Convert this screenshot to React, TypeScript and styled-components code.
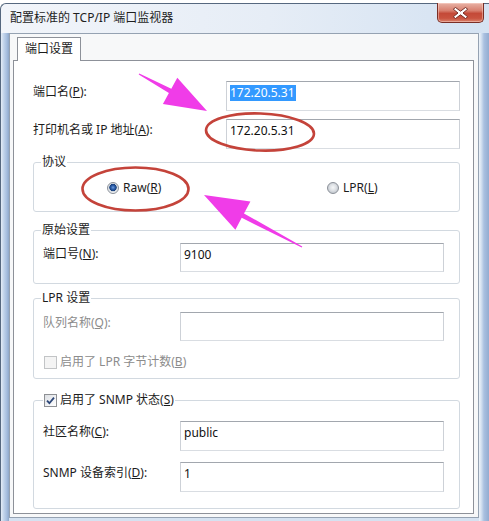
import React from "react";
import styled, { createGlobalStyle } from "styled-components";

const GlobalStyle = createGlobalStyle`
  html, body { margin: 0; padding: 0; background: #ffffff; }
  body {
    font-family: "Noto Sans", "Noto Sans CJK SC", sans-serif;
    font-size: 12px;
    color: #1c1c1c;
  }
  * { box-sizing: border-box; }
  u { text-underline-offset: 1px; }
`;

const Stage = styled.div`
  position: relative;
  width: 489px;
  height: 521px;
  padding-top: 3px;
  overflow: hidden;
  background: #ffffff;
`;

const Window = styled.div`
  height: 518px;
  display: flex;
  flex-direction: column;
  border-top: 1px solid #56687f;
  border-left: 1px solid #56687f;
  border-top-left-radius: 6px;
  background: linear-gradient(to right, #f2f5fa 0%, #e6edf6 55%, #d4e2f2 100%);
`;

const TitleBar = styled.div`
  height: 29px;
  display: flex;
  align-items: flex-start;
  justify-content: space-between;
  padding-left: 9px;
`;

const TitleText = styled.div`
  margin-top: 6px;
  line-height: 16px;
  color: #1e1e1e;
  white-space: nowrap;
`;

const CloseButton = styled.div`
  width: 47px;
  height: 20px;
  margin-top: -1px;
  margin-right: 5px;
  display: flex;
  align-items: center;
  justify-content: center;
  border: 1px solid #7a2e25;
  border-top: none;
  border-radius: 0 0 5px 5px;
  background: linear-gradient(to bottom, #e8b2a6 0%, #d8806f 40%, #c44a38 55%, #c9533f 80%, #d9826c 100%);
  box-shadow: inset 0 0 0 1px rgba(255, 220, 210, 0.45);
`;

const Body = styled.div`
  flex: 1;
  display: flex;
  padding: 0 10px 3px 8px;
  background:
    linear-gradient(to right, #e4ecf6 0px, #bfd2ea 3px, #a4bcdd 6px, #8ea7c9 8px, transparent 8px),
    linear-gradient(to left, #93acd0 0px, #a9c0e0 5px, #d8e4f2 8px, #eef3f9 10px, transparent 10px),
    #d5e2f1;
`;

const Client = styled.div`
  flex: 1;
  display: flex;
  flex-direction: column;
  background: #f7f8f9;
  border: 1px solid #95a2b2;
  padding: 3px 4px 3px 3px;
`;

const TabStrip = styled.div`
  display: flex;
  padding-left: 4px;
`;

const Tab = styled.div`
  position: relative;
  z-index: 1;
  height: 24px;
  margin-bottom: -1px;
  padding: 0 7px;
  line-height: 22px;
  background: #ffffff;
  border: 1px solid #8d9199;
  border-bottom: none;
  color: #1c1c1c;
`;

const TabPage = styled.div`
  flex: 1;
  display: flex;
  flex-direction: column;
  background: #ffffff;
  border: 1px solid #8d9199;
  padding: 20px 13px 4px 19px;
`;

const FieldRow = styled.div<{ $label: number; $input: number; $mt?: number }>`
  display: grid;
  grid-template-columns: ${(p) => p.$label}px ${(p) => p.$input}px;
  align-items: start;
  margin-top: ${(p) => p.$mt ?? 0}px;
`;

const Label = styled.div<{ $disabled?: boolean }>`
  padding-top: 3px;
  line-height: 16px;
  white-space: nowrap;
  color: ${(p) => (p.$disabled ? "#8c8c8c" : "#1c1c1c")};
`;

const TextBox = styled.div<{ $h?: number }>`
  height: ${(p) => p.$h ?? 29}px;
  padding: 2px 3px;
  line-height: 17px;
  background: #ffffff;
  border: 1px solid;
  border-color: #a2a7ae #cdd1d7 #d9dde2 #cdd1d7;
  color: #111111;
  white-space: nowrap;
`;

const Selected = styled.span`
  display: inline-block;
  line-height: 16px;
  padding: 0 1px 0 0;
  background: #3399ff;
  color: #ffffff;
`;

const Group = styled.fieldset<{ $mt: number; $pb: number }>`
  margin: ${(p) => p.$mt}px 0 0 0;
  min-width: 0;
  padding: 0 9px ${(p) => p.$pb}px 9px;
  border: 1px solid #d2d9e0;
  border-radius: 3px;
`;

const Legend = styled.legend<{ $ml?: number }>`
  margin-left: ${(p) => p.$ml ?? -2}px;
  padding: 0 1px;
  line-height: 14px;
  height: 14px;
  display: flex;
  align-items: center;
  gap: 3px;
  white-space: nowrap;
  color: #1c1c1c;
`;

const RadioRow = styled.div`
  display: grid;
  grid-template-columns: 220px auto;
  align-items: center;
  height: 20px;
  margin: 9px 0 13px 0;
  padding-left: 64px;
`;

const RadioItem = styled.div`
  display: flex;
  align-items: center;
  gap: 4px;
  line-height: 16px;
  white-space: nowrap;
`;

const RadioCircle = styled.span<{ $checked?: boolean }>`
  width: 12px;
  height: 12px;
  border-radius: 50%;
  border: 1px solid #8b9098;
  background: ${(p) =>
    p.$checked
      ? "radial-gradient(circle at 50% 45%, #6d9ee0 0px, #2a5aa6 2px, #173f7c 3.4px, #c9d0d8 3.9px, #eef1f4 5px)"
      : "radial-gradient(circle at 50% 45%, #f6f7f8 0px, #dfe2e6 3px, #c9ced4 5px)"};
`;

const CheckRow = styled.div<{ $disabled?: boolean }>`
  display: flex;
  align-items: center;
  gap: 3px;
  height: 16px;
  margin: 13px 0 0 1px;
  line-height: 16px;
  white-space: nowrap;
  color: ${(p) => (p.$disabled ? "#8c8c8c" : "#1c1c1c")};
`;

const CheckBox = styled.span<{ $disabled?: boolean }>`
  width: 13px;
  height: 13px;
  flex: none;
  display: flex;
  align-items: center;
  justify-content: center;
  border: 1px solid ${(p) => (p.$disabled ? "#c2c4c6" : "#8e9094")};
  background: ${(p) =>
    p.$disabled ? "#f4f4f4" : "linear-gradient(135deg, #dcdfe3 0%, #f2f3f5 60%, #ffffff 100%)"};
`;

const Overlay = styled.svg`
  position: absolute;
  left: 0;
  top: 0;
  width: 489px;
  height: 521px;
  pointer-events: none;
`;

const CloseGlyph = () => (
  <svg width="17" height="14" viewBox="0 0 17 14">
    <path
      d="M3.5 1.5 L8.5 5.2 L13.5 1.5 L15.7 3.2 L11 7 L15.7 10.8 L13.5 12.5 L8.5 8.8 L3.5 12.5 L1.3 10.8 L6 7 L1.3 3.2 Z"
      fill="#ffffff"
      stroke="#6b231b"
      strokeWidth="0.9"
      strokeLinejoin="round"
    />
  </svg>
);

const CheckMark = () => (
  <svg width="11" height="11" viewBox="0 0 11 11">
    <path d="M2 5.6 L4.4 8.2 L9 2.6" fill="none" stroke="#2d4778" strokeWidth="1.8" />
  </svg>
);

type Pt = [number, number];

// Tapered arrow: thin tail, widening shaft, triangular head at the tip.
function arrowPoints(tail: Pt, tip: Pt, headLen: number, headHalf: number, shaftHalf: number): string {
  const dx = tip[0] - tail[0];
  const dy = tip[1] - tail[1];
  const len = Math.hypot(dx, dy);
  const ux = dx / len;
  const uy = dy / len;
  const nx = -uy;
  const ny = ux;
  const bx = tip[0] - ux * headLen;
  const by = tip[1] - uy * headLen;
  const pts: Pt[] = [
    [tail[0] + nx * 0.6, tail[1] + ny * 0.6],
    [bx + nx * shaftHalf, by + ny * shaftHalf],
    [bx + nx * headHalf, by + ny * headHalf],
    tip,
    [bx - nx * headHalf, by - ny * headHalf],
    [bx - nx * shaftHalf, by - ny * shaftHalf],
    [tail[0] - nx * 0.6, tail[1] - ny * 0.6],
  ];
  return pts.map((p) => `${p[0].toFixed(1)},${p[1].toFixed(1)}`).join(" ");
}

export default function App() {
  return (
    <>
      <GlobalStyle />
      <Stage>
        <Window>
          <TitleBar>
            <TitleText>配置标准的 TCP/IP 端口监视器</TitleText>
            <CloseButton>
              <CloseGlyph />
            </CloseButton>
          </TitleBar>
          <Body>
            <Client>
              <TabStrip>
                <Tab>端口设置</Tab>
              </TabStrip>
              <TabPage>
                <FieldRow $label={193} $input={234}>
                  <Label>
                    端口名(<u>P</u>):
                  </Label>
                  <TextBox $h={30}>
                    <Selected>172.20.5.31</Selected>
                  </TextBox>
                </FieldRow>
                <FieldRow $label={193} $input={234} $mt={8}>
                  <Label>
                    打印机名或 IP 地址(<u>A</u>):
                  </Label>
                  <TextBox $h={30}>172.20.5.31</TextBox>
                </FieldRow>

                <Group $mt={6} $pb={0}>
                  <Legend>协议</Legend>
                  <RadioRow>
                    <RadioItem>
                      <RadioCircle $checked />
                      <span>
                        Raw(<u>R</u>)
                      </span>
                    </RadioItem>
                    <RadioItem>
                      <RadioCircle />
                      <span>
                        LPR(<u>L</u>)
                      </span>
                    </RadioItem>
                  </RadioRow>
                </Group>

                <Group $mt={11} $pb={11}>
                  <Legend>原始设置</Legend>
                  <FieldRow $label={137} $input={264} $mt={6}>
                    <Label>
                      端口号(<u>N</u>):
                    </Label>
                    <TextBox>9100</TextBox>
                  </FieldRow>
                </Group>

                <Group $mt={7} $pb={8}>
                  <Legend>LPR 设置</Legend>
                  <FieldRow $label={137} $input={264} $mt={7}>
                    <Label $disabled>
                      队列名称(<u>Q</u>):
                    </Label>
                    <TextBox />
                  </FieldRow>
                  <CheckRow $disabled>
                    <CheckBox $disabled />
                    <span>
                      启用了 LPR 字节计数(<u>B</u>)
                    </span>
                  </CheckRow>
                </Group>

                <Group $mt={14} $pb={16}>
                  <Legend $ml={0}>
                    <CheckBox>
                      <CheckMark />
                    </CheckBox>
                    <span>
                      启用了 SNMP 状态(<u>S</u>)
                    </span>
                  </Legend>
                  <FieldRow $label={137} $input={264} $mt={14}>
                    <Label>
                      社区名称(<u>C</u>):
                    </Label>
                    <TextBox $h={30}>public</TextBox>
                  </FieldRow>
                  <FieldRow $label={137} $input={264} $mt={11}>
                    <Label>
                      SNMP 设备索引(<u>D</u>):
                    </Label>
                    <TextBox $h={30}>1</TextBox>
                  </FieldRow>
                </Group>
              </TabPage>
            </Client>
          </Body>
        </Window>

        <Overlay viewBox="0 0 489 521">
          <ellipse cx="260" cy="132" rx="54" ry="18.5" fill="none" stroke="#c4433a" strokeWidth="2.6" transform="rotate(2 260 132)" />
          <ellipse cx="135.5" cy="189" rx="53" ry="21.5" fill="none" stroke="#c4433a" strokeWidth="2.6" />
          <polygon points={arrowPoints([139, 74], [207, 111], 42, 15, 2.5)} fill="#f03ce8" />
          <polygon points={arrowPoints([302, 247], [204, 195], 44, 16, 2.5)} fill="#f03ce8" />
        </Overlay>
      </Stage>
    </>
  );
}
